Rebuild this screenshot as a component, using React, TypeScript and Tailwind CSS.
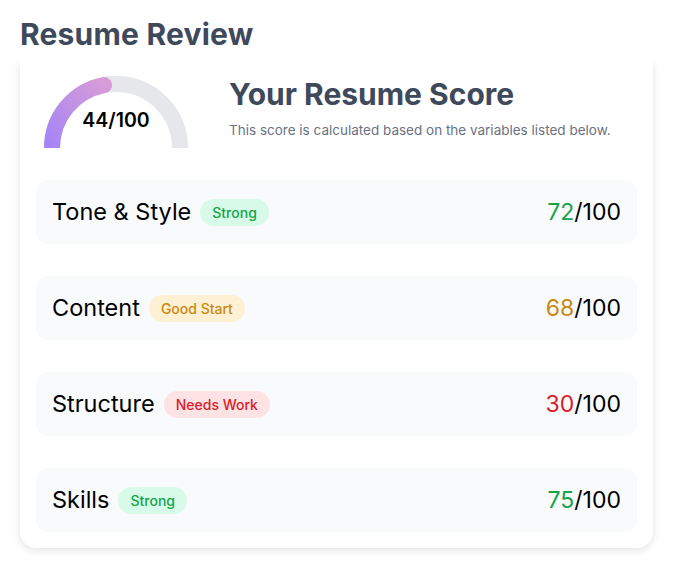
import React from "react";

type Row = { label: string; badge: string; tone: "green" | "amber" | "red"; score: number };

const rows: Row[] = [
  { label: "Tone & Style", badge: "Strong", tone: "green", score: 72 },
  { label: "Content", badge: "Good Start", tone: "amber", score: 68 },
  { label: "Structure", badge: "Needs Work", tone: "red", score: 30 },
  { label: "Skills", badge: "Strong", tone: "green", score: 75 },
];

const badgeCls: Record<Row["tone"], string> = {
  green: "bg-[#d7fbe8] text-[#16a34a]",
  amber: "bg-[#fdf0d3] text-[#c98a12]",
  red: "bg-[#fde3e3] text-[#dc1c2b]",
};
const scoreCls: Record<Row["tone"], string> = {
  green: "text-[#16a34a]",
  amber: "text-[#c98a12]",
  red: "text-[#dc1c2b]",
};

function Gauge() {
  return (
    <div className="relative h-[72px] w-[144px] shrink-0">
      <svg width="144" height="72" viewBox="0 0 144 72" className="block">
        <defs>
          <linearGradient id="g" x1="0" y1="1" x2="1" y2="0">
            <stop offset="0%" stopColor="#a585f6" />
            <stop offset="100%" stopColor="#d79bd8" />
          </linearGradient>
        </defs>
        <path d="M 8 72 A 64 64 0 0 1 136 72" fill="none" stroke="#e5e7eb" strokeWidth="16" />
        <path d="M 8 72 A 64 64 0 0 1 60 9.13" fill="none" stroke="url(#g)" strokeWidth="16" strokeLinecap="round" />
      </svg>
      <div className="absolute left-0 right-0 top-[35px] text-center text-[19.5px] font-semibold leading-none text-black">
        44/100
      </div>
    </div>
  );
}

export default function App() {
  return (
    <div className="min-h-[568px] bg-white px-5 pt-[17px]" style={{ fontFamily: "Inter, 'Noto Sans', sans-serif" }}>
      <h1 className="text-[30px] font-bold leading-[35px] tracking-[0.2px] text-[#3e4a5c]">Resume Review</h1>
      <div className="-mx-5 mt-[10px] overflow-hidden px-5 pb-6">
        <div className="rounded-b-2xl bg-white px-4 pb-4 pt-[14px] shadow-[0_2px_8px_rgba(0,0,0,0.12)]">
          <div className="flex items-start">
            <div className="ml-2">
              <Gauge />
            </div>
            <div className="ml-[41px] -mt-[1px]">
              <h2 className="text-[30px] font-bold leading-[38px] text-[#3e4a5c]">Your Resume Score</h2>
              <p className="mt-[9px] text-[13.5px] leading-4 text-[#6b7280]">
                This score is calculated based on the variables listed below.
              </p>
            </div>
          </div>
          <div className="mt-8 flex flex-col gap-8">
            {rows.map((r) => (
              <div key={r.label} className="flex h-16 items-center justify-between rounded-xl bg-[#f8fafc] px-4">
                <div className="flex items-center gap-[9px]">
                  <span className="text-[23.5px] leading-none text-black">{r.label}</span>
                  <span className={`rounded-full px-3 py-[6px] text-[14px] font-medium leading-[15px] ${badgeCls[r.tone]}`}>
                    {r.badge}
                  </span>
                </div>
                <span className="text-[23px] leading-none text-black">
                  <span className={scoreCls[r.tone]}>{r.score}</span>/100
                </span>
              </div>
            ))}
          </div>
        </div>
      </div>
    </div>
  );
}
